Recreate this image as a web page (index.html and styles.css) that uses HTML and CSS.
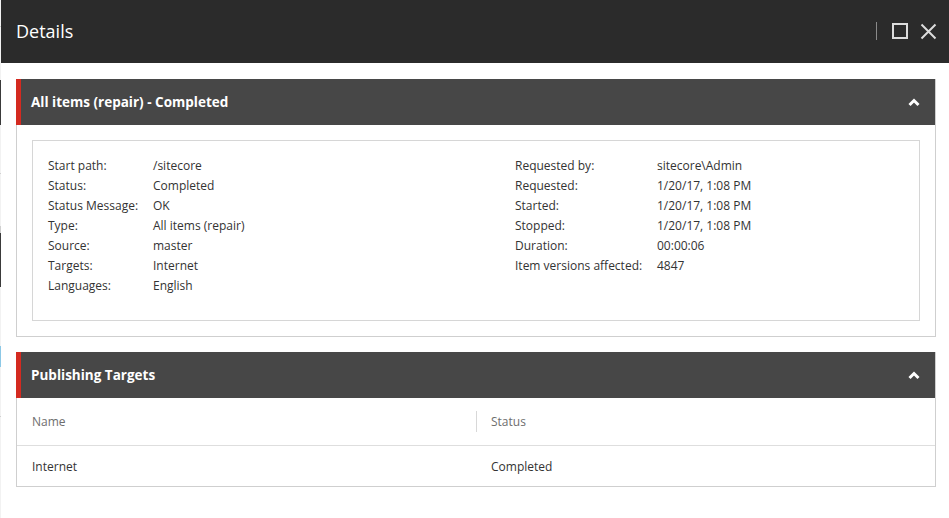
FILE: index.html
```html
<!DOCTYPE html>
<html>
<head>
<meta charset="utf-8">
<link rel="stylesheet" href="styles.css">
</head>
<body>
<div class="page">
  <div class="edge"></div>
  <div class="dialog">
    <div class="titlebar">
      <div class="title">Details</div>
      <div class="controls">
        <span class="sep"></span>
        <svg class="ico" width="16" height="16" viewBox="0 0 16 16"><rect x="1" y="1" width="14" height="14" fill="none" stroke="#dcdcdc" stroke-width="2"/></svg>
        <svg class="ico" width="17" height="17" viewBox="0 0 17 17"><path d="M1.5 1.5 L15.5 15.5 M15.5 1.5 L1.5 15.5" stroke="#dcdcdc" stroke-width="2" fill="none"/></svg>
      </div>
    </div>
    <div class="content">
      <div class="panel">
        <div class="panel-head">
          <span class="panel-title">All items (repair) - Completed</span>
          <svg class="chev" width="12" height="9" viewBox="0 0 12 9"><path d="M1.5 7 L6 2.5 L10.5 7" stroke="#fff" stroke-width="3" fill="none"/></svg>
        </div>
        <div class="panel-body">
          <div class="infobox">
            <dl class="col col-left">
              <dt>Start path:</dt><dd>/sitecore</dd>
              <dt>Status:</dt><dd>Completed</dd>
              <dt>Status Message:</dt><dd>OK</dd>
              <dt>Type:</dt><dd>All items (repair)</dd>
              <dt>Source:</dt><dd>master</dd>
              <dt>Targets:</dt><dd>Internet</dd>
              <dt>Languages:</dt><dd>English</dd>
            </dl>
            <dl class="col col-right">
              <dt>Requested by:</dt><dd>sitecore\Admin</dd>
              <dt>Requested:</dt><dd>1/20/17, 1:08 PM</dd>
              <dt>Started:</dt><dd>1/20/17, 1:08 PM</dd>
              <dt>Stopped:</dt><dd>1/20/17, 1:08 PM</dd>
              <dt>Duration:</dt><dd>00:00:06</dd>
              <dt>Item versions affected:</dt><dd>4847</dd>
            </dl>
          </div>
        </div>
      </div>
      <div class="panel">
        <div class="panel-head">
          <span class="panel-title">Publishing Targets</span>
          <svg class="chev" width="12" height="9" viewBox="0 0 12 9"><path d="M1.5 7 L6 2.5 L10.5 7" stroke="#fff" stroke-width="3" fill="none"/></svg>
        </div>
        <div class="table">
          <div class="thead">
            <div class="th">Name</div>
            <div class="th th-div">Status</div>
          </div>
          <div class="trow">
            <div class="td">Internet</div>
            <div class="td">Completed</div>
          </div>
        </div>
      </div>
    </div>
  </div>
</div>
</body>
</html>
```
FILE: styles.css
```css
html, body {
  margin: 0;
  padding: 0;
  background: #fff;
}
body {
  font-family: "Open Sans", "Liberation Sans", sans-serif;
  font-size: 12px;
  color: #333;
}
.page {
  display: flex;
  height: 518px;
  overflow: hidden;
}
.edge {
  width: 1px;
  flex: none;
  background: linear-gradient(to bottom,
    #f2f2f2 0, #f2f2f2 26px, #cfcfcf 26px, #cfcfcf 27px, #f2f2f2 27px, #f2f2f2 80px,
    #3a3a3a 80px, #3a3a3a 125px, #f2f2f2 125px, #f2f2f2 173px, #d0d0d0 173px, #d0d0d0 174px,
    #f2f2f2 174px, #f2f2f2 226px, #cfcfcf 226px, #cfcfcf 233px, #3a3a3a 233px, #3a3a3a 287px,
    #f2f2f2 287px, #f2f2f2 346px, #8cc8e6 346px, #8cc8e6 367px, #f2f2f2 367px, #f2f2f2 416px,
    #d0d0d0 416px, #d0d0d0 417px, #f2f2f2 417px);
}
.dialog {
  flex: 1;
  display: flex;
  flex-direction: column;
  background: #fff;
}
.titlebar {
  height: 63px;
  background: #2b2b2b;
  display: flex;
  align-items: center;
  justify-content: space-between;
  padding: 0 12px 0 15px;
  flex: none;
}
.title {
  color: #fff;
  font-size: 18px;
  line-height: 24px;
  margin-top: -2px;
}
.controls {
  display: flex;
  align-items: center;
  margin-top: -1px;
}
.sep {
  width: 1px;
  height: 18px;
  background: #8a8a8a;
  margin-right: 15px;
}
.ico {
  display: block;
}
.controls .ico + .ico {
  margin-left: 12px;
}
.content {
  padding: 16px 13px 0 15px;
  display: flex;
  flex-direction: column;
  gap: 15px;
}
.panel {
  border-right: 1px solid #cfcfcf;
  border-bottom: 1px solid #cfcfcf;
}
.panel-head {
  height: 46px;
  background: #474747;
  border-left: 5px solid #d42a20;
  display: flex;
  align-items: center;
  justify-content: space-between;
  padding: 0 15px 0 10px;
}
.panel-title {
  color: #fff;
  font-weight: 700;
  font-size: 13.5px;
  margin-top: -1px;
}
.chev {
  display: block;
}
.panel-body {
  border-left: 1px solid #cfcfcf;
  padding: 15px;
}
.infobox {
  box-sizing: border-box;
  border: 1px solid #d6d6d6;
  height: 181px;
  padding: 15px 15px 0 15px;
  display: flex;
}
.col {
  margin: 0;
  display: grid;
  grid-auto-rows: 20px;
  align-content: start;
  line-height: 20px;
}
.col-left {
  width: 467px;
  grid-template-columns: 105px auto;
}
.col-right {
  grid-template-columns: 142px auto;
}
.col dt, .col dd {
  margin: 0;
  white-space: nowrap;
}
.table {
  border-left: 1px solid #cfcfcf;
}
.thead, .trow {
  display: grid;
  grid-template-columns: 1fr 1fr;
}
.thead {
  height: 47px;
  border-bottom: 1px solid #dedede;
  align-items: center;
}
.trow {
  height: 40px;
  align-items: center;
}
.th {
  color: #6e6e6e;
  padding-left: 15px;
  line-height: 20px;
  padding-top: 1px;
}
.th-div {
  border-left: 1px solid #d8d8d8;
  padding-left: 14px;
}
.td {
  padding-left: 15px;
  color: #333;
}
```
